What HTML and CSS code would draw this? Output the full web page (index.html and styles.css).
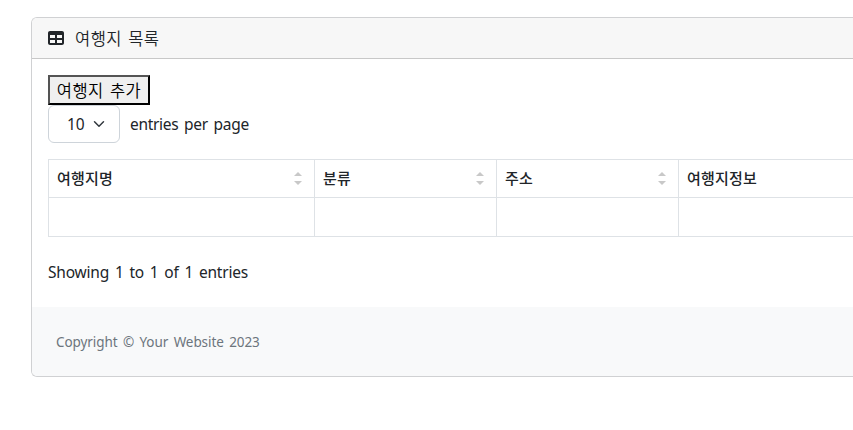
FILE: index.html
```html
<!DOCTYPE html>
<html lang="ko">
<head>
<meta charset="utf-8">
<title>여행지 목록</title>
<link rel="stylesheet" href="styles.css">
</head>
<body>
<main class="card">
  <header class="card-header">
    <svg class="table-icon" viewBox="0 0 512 512"><path fill="currentColor" d="M64 256V160H224v96H64zm0 64H224v96H64V320zm224 96V320H448v96H288zM448 256H288V160H448v96zM64 32C28.700 32 0 60.700 0 96V416c0 35.300 28.700 64 64 64H448c35.300 0 64-28.700 64-64V96c0-35.300-28.700-64-64-64H64z"/></svg>
    <span class="title">여행지 목록</span>
  </header>
  <section class="card-body">
    <button class="add">여행지 추가</button>
    <div class="per-page">
      <div class="select"><span>10</span><svg class="chevron" viewBox="0 0 16 16"><path fill="none" stroke="#343a40" stroke-linecap="round" stroke-linejoin="round" stroke-width="2" d="m2 5 6 6 6-6"/></svg></div>
      <span class="entries">entries per page</span>
    </div>
    <table>
      <colgroup><col class="name"><col class="mid"><col class="mid"><col></colgroup>
      <thead><tr>
        <th><div class="head">여행지명<i class="sort"></i></div></th>
        <th><div class="head">분류<i class="sort"></i></div></th>
        <th><div class="head">주소<i class="sort"></i></div></th>
        <th><div class="head">여행지정보</div></th>
      </tr></thead>
      <tbody><tr><td></td><td></td><td></td><td></td></tr></tbody>
    </table>
    <div class="info-line">Showing 1 to 1 of 1 entries</div>
  </section>
  <footer class="footer"><span>Copyright © Your Website 2023</span></footer>
</main>
</body>
</html>
```
FILE: styles.css
```css
* { box-sizing: border-box; }
body {
  margin: 0;
  padding: 17px 0 0 31px;
  background: #fff;
  color: #212529;
  font: 400 15.5px/24px "Noto Sans", "Noto Sans CJK KR", sans-serif;
  word-spacing: 2px;
}
.card {
  height: 360px;
  border: 1px solid #d0d1d3;
  border-right: 0;
  border-radius: 6px 0 0 6px;
  overflow: hidden;
}
.card-header {
  display: flex;
  align-items: center;
  height: 41px;
  padding: 0 16px;
  background: #f7f7f7;
  border-bottom: 1px solid #c8c8c8;
}
.table-icon { width: 16px; height: 16px; margin-right: 10px; }
.title, .add {
  font-family: "Noto Sans CJK KR", sans-serif;
  font-size: 16.5px;
  font-weight: 350;
  letter-spacing: .5px;
  line-height: 22px;
  word-spacing: 1px;
}
.title { margin: -1px 0 0 1px; }
.card-body { height: 248px; padding: 16px 0 16px 16px; }
.add {
  display: block;
  width: 102px;
  height: 30px;
  padding: 0 0 1px;
  border: 2px outset #000;
  background: #efefef;
  color: #000;
  white-space: nowrap;
}
.per-page { display: flex; align-items: center; height: 38px; }
.select {
  display: flex;
  align-items: center;
  width: 72px;
  height: 38px;
  margin-right: 10px;
  padding-left: 18px;
  border: 1px solid #ced4da;
  border-radius: 6px;
}
.chevron { width: 12px; height: 12px; margin-left: 8px; }
.entries { letter-spacing: -.3px; }
table {
  width: 100%;
  margin-top: 16px;
  table-layout: fixed;
  border-collapse: collapse;
}
.name { width: 266px; }
.mid { width: 182px; }
th, td { border: 1px solid #dee2e6; border-right: 0; padding: 0 8px; }
th { height: 38px; text-align: left; }
td { height: 39px; }
.head {
  display: flex;
  align-items: center;
  justify-content: space-between;
  height: 22px;
  padding-bottom: 2px;
  font: 500 15px/20px "Noto Sans CJK KR", sans-serif;
  letter-spacing: .2px;
}
.sort { display: grid; gap: 5px; margin: 2px 4px 0 0; }
.sort::before, .sort::after {
  content: "";
  border: 4px solid transparent;
}
.sort::before { border-top: 0; border-bottom-color: #c8c8c8; }
.sort::after { border-bottom: 0; border-top-color: #c8c8c8; }
.info-line { margin-top: 23px; letter-spacing: -.2px; }
.footer {
  display: flex;
  align-items: center;
  height: 69px;
  padding: 0 24px;
  background: #f8f9fa;
  color: #6c757d;
  font-size: 13.5px;
  letter-spacing: -.08px;
}
```
